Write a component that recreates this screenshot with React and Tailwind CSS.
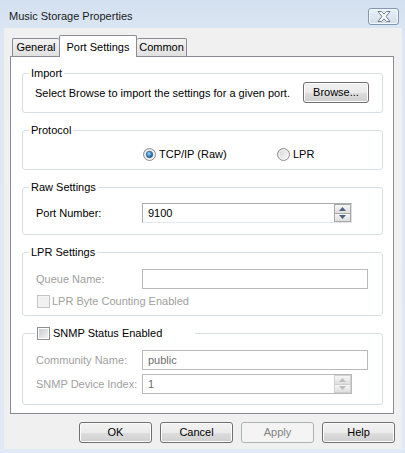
import React from 'react'

const btn =
  'h-[21px] flex items-center justify-center rounded-[3px] border border-[#707070] bg-[linear-gradient(#f2f2f2_0%,#ebebeb_50%,#dddddd_51%,#cfcfcf_100%)] text-black shadow-[inset_0_0_0_1px_#fcfcfc]'

function Radio({ checked }) {
  return (
    <svg width="13" height="13" viewBox="0 0 13 13" className="shrink-0">
      <defs>
        <linearGradient id="ring" x1="0" y1="0" x2="1" y2="1">
          <stop offset="0" stopColor="#d2d2d2" />
          <stop offset="1" stopColor="#fbfbfb" />
        </linearGradient>
        <radialGradient id="dot" cx="0.4" cy="0.35" r="0.75">
          <stop offset="0" stopColor="#9fdcfb" />
          <stop offset="0.5" stopColor="#3d8ccc" />
          <stop offset="1" stopColor="#134a7a" />
        </radialGradient>
      </defs>
      <circle cx="6.5" cy="6.5" r="6" fill="url(#ring)" stroke="#8f8f8f" />
      <circle cx="6.5" cy="6.5" r="4.5" fill="none" stroke="#f4f4f4" />
      {checked && <circle cx="6.5" cy="6.5" r="3.2" fill="url(#dot)" stroke="#1b4f7d" strokeWidth="0.6" />}
    </svg>
  )
}

function Check({ disabled }) {
  return (
    <span
      className={`block h-[13px] w-[13px] shrink-0 border p-px ${
        disabled ? 'border-[#c4c4c4] bg-[#f4f4f4]' : 'border-[#8e8f8f] bg-white'
      }`}
    >
      <span
        className={`block h-full w-full ${
          disabled
            ? 'bg-[#f0f0f0]'
            : 'bg-[linear-gradient(135deg,#c9ccd1,#f2f2f2)]'
        }`}
      />
    </span>
  )
}

function Arrow({ up, color }) {
  return (
    <svg width="7" height="4" viewBox="0 0 7 4">
      <path d={up ? 'M0 4 L3.5 0 L7 4 Z' : 'M0 0 L3.5 4 L7 0 Z'} fill={color} />
    </svg>
  )
}

function Spin({ disabled }) {
  const c = disabled ? '#bdbdbd' : '#4d6185'
  const half = `flex flex-1 items-center justify-center border ${
    disabled ? 'border-[#d0d0d0]' : 'border-[#a7a7a7]'
  } bg-[linear-gradient(#f6f6f6,#dedede)]`
  return (
    <div className="ml-auto flex h-full w-[17px] flex-col">
      <div className={half}>
        <Arrow up color={c} />
      </div>
      <div className={`${half} border-t-0`}>
        <Arrow color={c} />
      </div>
    </div>
  )
}

function Input({ value, width, disabled, spin }) {
  return (
    <div
      className={`flex h-[20px] items-center border ${width} ${
        disabled
          ? 'border-[#b9b9b9] text-[#6d6d6d]'
          : 'border-[#abadb3] border-b-[#e3e9ef] border-r-[#dbdfe6] text-black'
      } bg-white`}
    >
      <span className="pl-[5px]">{value}</span>
      {spin && <Spin disabled={disabled} />}
    </div>
  )
}

function Group({ legend, height, children, first, legendClass = 'ml-[6px] px-[2px]' }) {
  return (
    <fieldset
      className={`mx-[11px] ${first ? 'mt-[7px]' : 'mt-[9px]'} w-[361px] rounded-[3px] border border-[#d5dfe5] ${height}`}
    >
      <legend className={`leading-[16px] ${legendClass}`}>{legend}</legend>
      {children}
    </fieldset>
  )
}

function Tab({ label, selected, width, className = '' }) {
  return selected ? (
    <div
      className={`relative top-px z-10 flex h-[22px] items-start justify-center rounded-t-[2px] border border-b-0 border-[#898c95] bg-white pt-[3px] ${width}`}
    >
      {label}
    </div>
  ) : (
    <div
      className={`flex h-[18px] items-center justify-center rounded-t-[2px] border border-b-0 border-[#898c95] bg-[linear-gradient(#f3f3f3,#e0e0e0)] ${width} ${className}`}
    >
      {label}
    </div>
  )
}

export default function App() {
  return (
    <div className="flex h-[453px] w-[405px] flex-col bg-[linear-gradient(#d3e0ef,#dde8f5_40px,#dfeaf6)] font-['Liberation_Sans',Arial,sans-serif] text-[11px] text-black">
      {/* title bar */}
      <div className="flex h-[28px] shrink-0 items-start">
        <span className="pl-[9px] pt-[8px] leading-[16px] text-[#1a1a1a]">Music Storage Properties</span>
        <div className="ml-auto mr-[6px] mt-[8px] flex h-[17px] w-[31px] items-center justify-center rounded-[3px] border border-[#8296b0] bg-[linear-gradient(#e9f0f8,#d3deeb)] shadow-[inset_0_0_0_1px_#f4f8fc]">
          <svg width="14" height="11" viewBox="0 0 14 11">
            <path
              d="M1 0.5 H4.5 L7 3.2 L9.5 0.5 H13 L9 5.5 L13 10.5 H9.5 L7 7.8 L4.5 10.5 H1 L5 5.5 Z"
              fill="#ffffff"
              stroke="#5d6f88"
              strokeWidth="0.9"
              strokeLinejoin="round"
            />
          </svg>
        </div>
      </div>

      {/* client area */}
      <div className="mb-[4px] ml-[4px] mr-[3px] flex flex-1 flex-col bg-[#f0f0f0]">
        <div className="flex h-[28px] shrink-0 items-end pl-[8px]">
          <Tab label="General" width="w-[47px]" className="border-r-0" />
          <Tab label="Port Settings" selected width="w-[78px]" />
          <Tab label="Common" width="w-[50px]" className="border-l-0" />
        </div>

        <div className="ml-[6px] flex h-[358px] w-[384px] flex-col border border-[#898c95] bg-white pt-px">
          <Group legend="Import" height="h-[48px]" first>
            <div className="mt-[1px] flex items-center pl-[12px] pr-[13px]">
              <span className="pt-[2px]">Select Browse to import the settings for a given port.</span>
              <button className={`${btn} ml-auto w-[66px]`}>Browse...</button>
            </div>
          </Group>

          <Group legend="Protocol" height="h-[48px]">
            <div className="mt-[8px] flex h-[16px] items-center pl-[120px]">
              <label className="flex w-[134px] items-center gap-[3px]">
                <Radio checked />
                <span>TCP/IP (Raw)</span>
              </label>
              <label className="flex items-center gap-[3px]">
                <Radio />
                <span>LPR</span>
              </label>
            </div>
          </Group>

          <Group legend="Raw Settings" height="h-[56px]">
            <div className="mt-[8px] flex items-center pl-[13px]">
              <span className="w-[106px]">Port Number:</span>
              <Input value="9100" width="w-[210px]" spin />
            </div>
          </Group>

          <Group legend="LPR Settings" height="h-[72px]">
            <div className="mt-[9px] flex items-center pl-[13px] text-[#a0a0a0]">
              <span className="w-[106px]">Queue Name:</span>
              <Input value="" width="w-[226px]" disabled />
            </div>
            <label className="mt-[4px] flex items-center gap-[2px] pl-[14px] text-[#a0a0a0]">
              <Check disabled />
              <span>LPR Byte Counting Enabled</span>
            </label>
          </Group>

          <Group
            legend={
              <span className="flex h-[16px] items-center gap-[3px]">
                <Check />
                <span>SNMP Status Enabled</span>
              </span>
            }
            legendClass="ml-[12px] w-[160px] px-[2px]"
            height="h-[80px]"
          >
            <div className="mt-[9px] flex items-center pl-[13px] text-[#a0a0a0]">
              <span className="w-[106px]">Community Name:</span>
              <Input value="public" width="w-[226px]" disabled />
            </div>
            <div className="mt-[4px] flex items-center pl-[13px] text-[#a0a0a0]">
              <span className="w-[106px]">SNMP Device Index:</span>
              <Input value="1" width="w-[210px]" disabled spin />
            </div>
          </Group>
        </div>

        <div className="mt-[8px] flex gap-[8px] pl-[75px]">
          <button className={`${btn} w-[73px]`}>OK</button>
          <button className={`${btn} w-[73px]`}>Cancel</button>
          <button className="flex h-[21px] w-[73px] items-center justify-center rounded-[3px] border border-[#adb2b5] bg-[#f4f4f4] text-[#838383]">
            Apply
          </button>
          <button className={`${btn} w-[73px]`}>Help</button>
        </div>
      </div>
    </div>
  )
}
